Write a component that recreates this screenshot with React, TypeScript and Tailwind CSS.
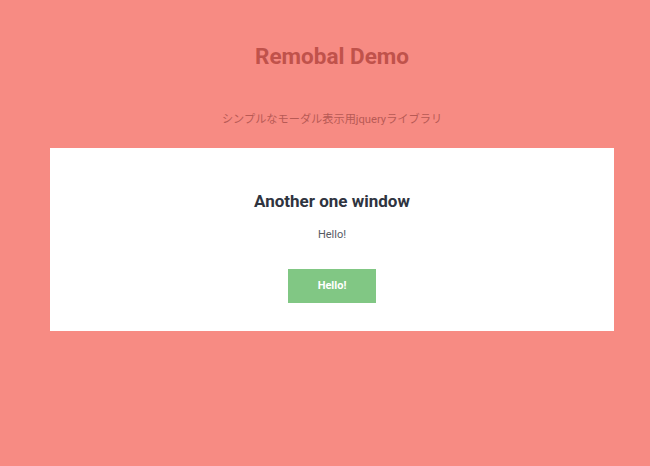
export default function App() {
  return (
    <div className="min-h-[466px] w-full overflow-hidden bg-[#f78b83] font-['Roboto','Noto_Sans_CJK_JP',sans-serif]">
      <div className="w-[664px]">
        <div className="pt-[41px] text-center">
          <h1 className="text-[22.5px] font-bold leading-[30px] text-[#c0524b]">Remobal Demo</h1>
          <p className="mt-[41px] text-[11.2px] leading-[16px] text-[#b85a55]">
            シンプルなモーダル表示用jqueryライブラリ
          </p>
        </div>
        <div className="mx-[50px] mt-[20px] flex h-[183px] flex-col items-center bg-white">
          <h2 className="mt-[42px] text-[17px] font-bold leading-[22px] text-[#2f3440]">Another one window</h2>
          <p className="mt-[15px] text-[11px] leading-[16px] text-[#555a63]">Hello!</p>
          <button className="mt-[26px] h-[34px] w-[88px] bg-[#81c784] text-[11px] font-bold text-white">
            Hello!
          </button>
        </div>
      </div>
    </div>
  );
}
